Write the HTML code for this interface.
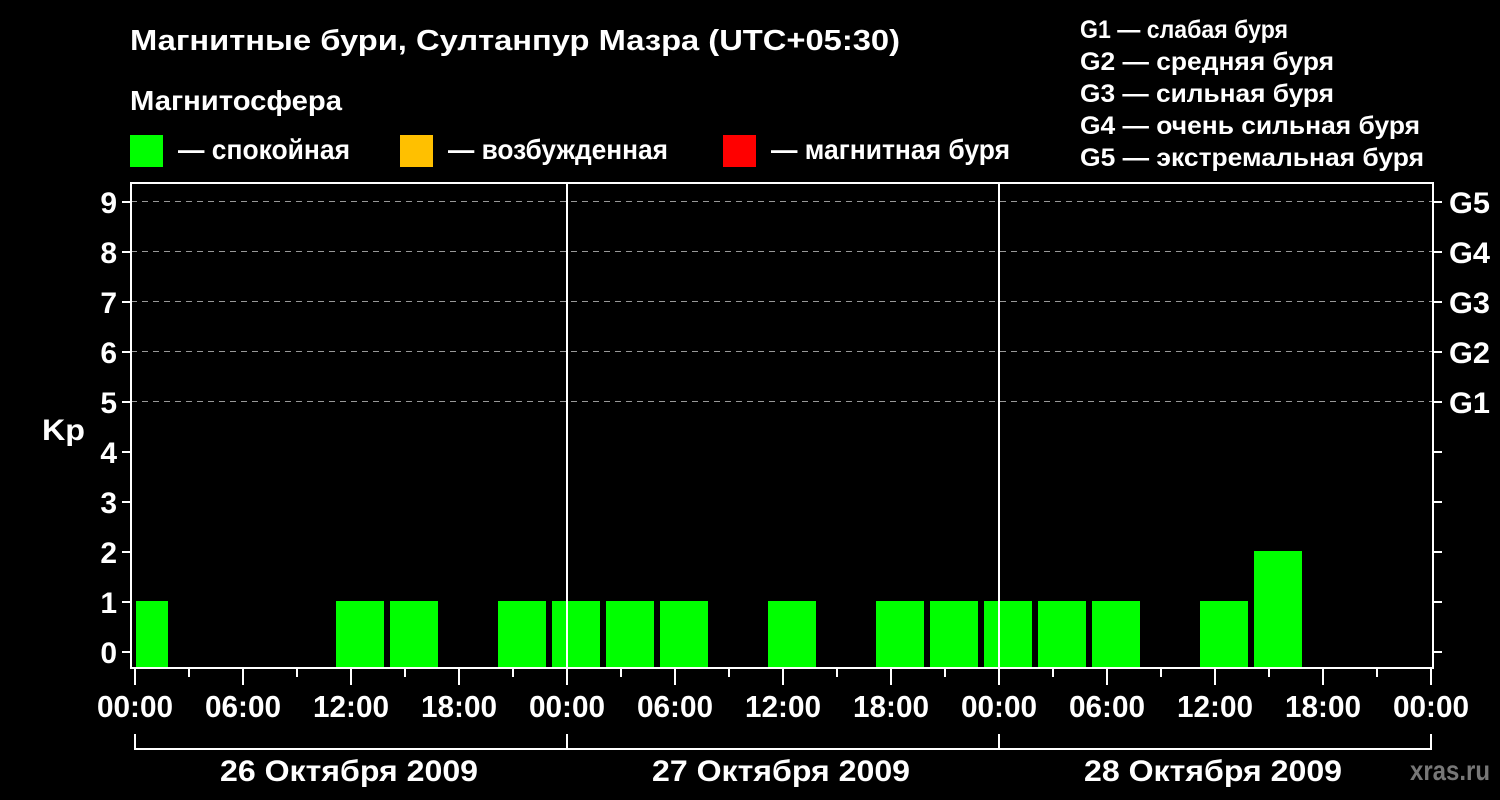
<!DOCTYPE html>
<html><head><meta charset="utf-8"><style>
html,body{margin:0;padding:0;background:#000;width:1500px;height:800px;overflow:hidden}
svg{display:block}
text{font-family:"Liberation Sans",sans-serif;font-weight:bold;fill:#fff}
</style></head><body>
<svg width="1500" height="800" viewBox="0 0 1500 800">
<rect width="1500" height="800" fill="#000"/>
<text x="130" y="50" font-size="29" textLength="770" lengthAdjust="spacingAndGlyphs">Магнитные бури, Султанпур Мазра (UTC+05:30)</text>
<text x="130" y="110" font-size="28" textLength="212" lengthAdjust="spacingAndGlyphs">Магнитосфера</text>
<rect x="130" y="135" width="33" height="32" fill="#00ff00"/>
<text x="178" y="159" font-size="28" textLength="172" lengthAdjust="spacingAndGlyphs">— спокойная</text>
<rect x="400" y="135" width="33" height="32" fill="#ffc000"/>
<text x="448" y="159" font-size="28" textLength="220" lengthAdjust="spacingAndGlyphs">— возбужденная</text>
<rect x="723" y="135" width="33" height="32" fill="#ff0000"/>
<text x="771" y="159" font-size="28" textLength="239" lengthAdjust="spacingAndGlyphs">— магнитная буря</text>
<g font-size="25">
<text x="1080" y="38" textLength="208" lengthAdjust="spacingAndGlyphs">G1 — слабая буря</text>
<text x="1080" y="70" textLength="254" lengthAdjust="spacingAndGlyphs">G2 — средняя буря</text>
<text x="1080" y="102" textLength="254" lengthAdjust="spacingAndGlyphs">G3 — сильная буря</text>
<text x="1080" y="134" textLength="340" lengthAdjust="spacingAndGlyphs">G4 — очень сильная буря</text>
<text x="1080" y="166" textLength="344" lengthAdjust="spacingAndGlyphs">G5 — экстремальная буря</text>
</g>
<g stroke="#999" stroke-width="1" stroke-dasharray="6,5">
<line x1="131" y1="201.5" x2="1433" y2="201.5"/>
<line x1="131" y1="251.5" x2="1433" y2="251.5"/>
<line x1="131" y1="301.5" x2="1433" y2="301.5"/>
<line x1="131" y1="351.5" x2="1433" y2="351.5"/>
<line x1="131" y1="401.5" x2="1433" y2="401.5"/>
</g>
<g fill="#00ff00">
<rect x="136" y="601" width="32" height="66"/>
<rect x="336" y="601" width="48" height="66"/>
<rect x="390" y="601" width="48" height="66"/>
<rect x="498" y="601" width="48" height="66"/>
<rect x="552" y="601" width="48" height="66"/>
<rect x="606" y="601" width="48" height="66"/>
<rect x="660" y="601" width="48" height="66"/>
<rect x="768" y="601" width="48" height="66"/>
<rect x="876" y="601" width="48" height="66"/>
<rect x="930" y="601" width="48" height="66"/>
<rect x="984" y="601" width="48" height="66"/>
<rect x="1038" y="601" width="48" height="66"/>
<rect x="1092" y="601" width="48" height="66"/>
<rect x="1200" y="601" width="48" height="66"/>
<rect x="1254" y="551" width="48" height="116"/>
</g>
<g stroke="#fff" stroke-width="2" fill="none">
<rect x="131" y="183" width="1302" height="485"/>
<line x1="567" y1="183" x2="567" y2="668"/>
<line x1="999" y1="183" x2="999" y2="668"/>
</g>
<g stroke="#fff" stroke-width="2" id="ticks"></g>
<g font-size="30" text-anchor="end" id="yl"></g>
<g font-size="30" id="gl"></g>
<g font-size="31" text-anchor="middle" id="xl"></g>
<text x="42" y="440" font-size="30" textLength="43" lengthAdjust="spacingAndGlyphs">Kp</text>
<g stroke="#fff" stroke-width="2" fill="none">
<polyline points="135,734 135,749 1431,749 1431,734"/>
<line x1="567" y1="734" x2="567" y2="749"/>
<line x1="999" y1="734" x2="999" y2="749"/>
</g>
<g font-size="30">
<text x="220" y="781" textLength="258" lengthAdjust="spacingAndGlyphs">26 Октября 2009</text>
<text x="652" y="781" textLength="258" lengthAdjust="spacingAndGlyphs">27 Октября 2009</text>
<text x="1084" y="781" textLength="258" lengthAdjust="spacingAndGlyphs">28 Октября 2009</text>
</g>
<text x="1490" y="780" font-size="28" text-anchor="end" textLength="80" lengthAdjust="spacingAndGlyphs" style="fill:#777">xras.ru</text>
</svg>
<script>
var ns="http://www.w3.org/2000/svg";
function el(p,t,a,txt){var e=document.createElementNS(ns,t);for(var k in a)e.setAttribute(k,a[k]);if(txt!=null)e.textContent=txt;document.getElementById(p).appendChild(e);}
for(var i=0;i<=9;i++){var y=652-50*i;
el("ticks","line",{x1:122,y1:y,x2:131,y2:y});
el("ticks","line",{x1:1433,y1:y,x2:1442,y2:y});
el("yl","text",{x:117,y:y+11},String(i));}
var G=["G1","G2","G3","G4","G5"];
for(var i=0;i<5;i++){el("gl","text",{x:1449,y:402-50*i+11,textLength:41,lengthAdjust:"spacingAndGlyphs"},G[i]);}
var lab=["00:00","06:00","12:00","18:00"];
for(var j=0;j<=24;j++){var x=135+54*j;var major=j%2==0;
el("ticks","line",{x1:x,y1:668,x2:x,y2:major?685:677});
if(major){el("xl","text",{x:x,y:717,textLength:76,lengthAdjust:"spacingAndGlyphs"},lab[(j/2)%4]);}}
</script>
</body></html>
